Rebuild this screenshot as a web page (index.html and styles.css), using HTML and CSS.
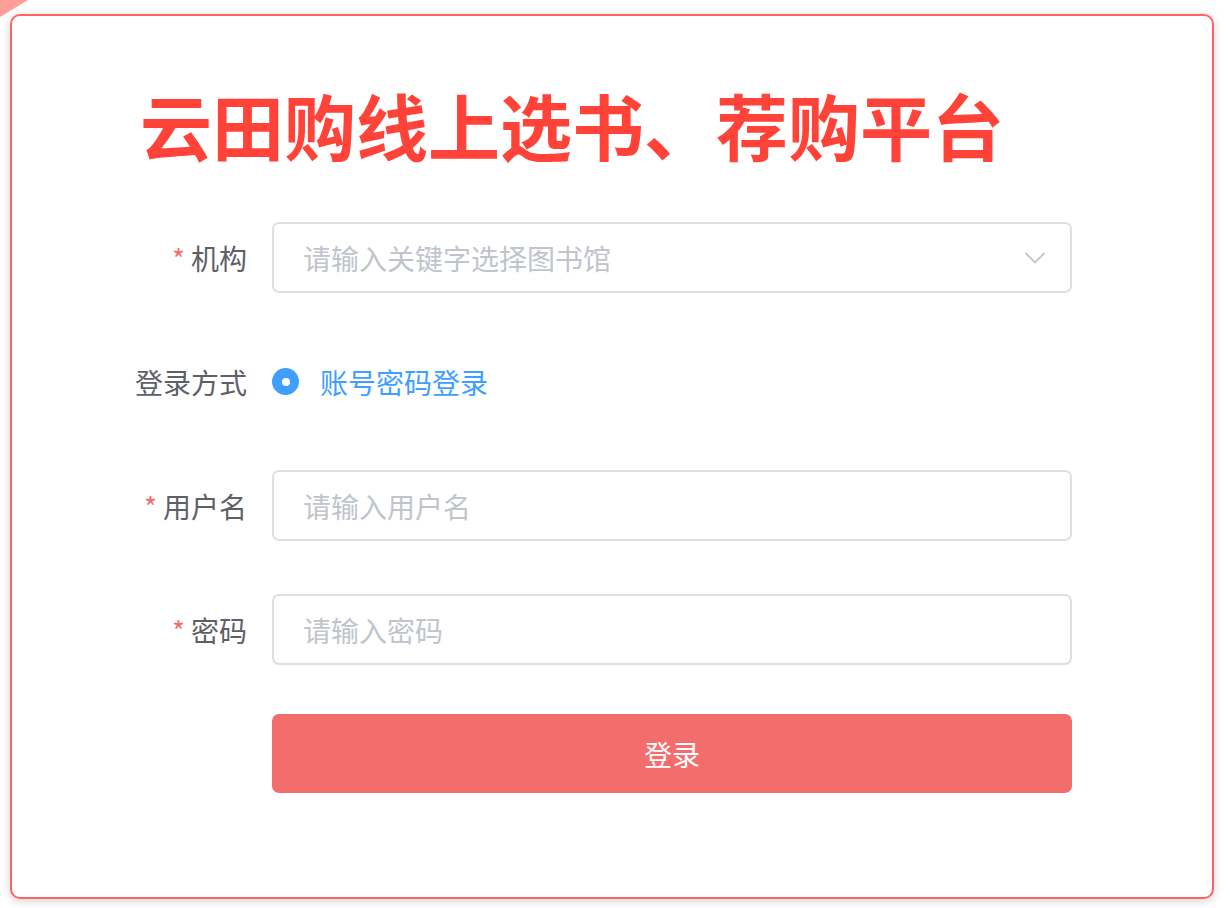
FILE: index.html
```html
<!DOCTYPE html>
<html lang="zh-CN">
<head>
<meta charset="utf-8">
<title>云田购线上选书、荐购平台</title>
<link rel="stylesheet" href="styles.css">
</head>
<body>
<div class="page">
  <div class="card">
    <h1 class="title">云田购线上选书、荐购平台</h1>
    <form class="form">
      <div class="row">
        <label class="label"><span class="req">*</span>机构</label>
        <div class="field select">
          <span class="placeholder">请输入关键字选择图书馆</span>
          <svg class="arrow" width="22" height="14" viewBox="0 0 22 14"><path d="M1.5 2 L11 11.5 L20.5 2" fill="none" stroke="#c0c4cc" stroke-width="1.8"/></svg>
        </div>
      </div>
      <div class="row">
        <label class="label">登录方式</label>
        <div class="radio">
          <span class="radio-dot"></span>
          <span class="radio-text">账号密码登录</span>
        </div>
      </div>
      <div class="row">
        <label class="label"><span class="req">*</span>用户名</label>
        <div class="field"><span class="placeholder">请输入用户名</span></div>
      </div>
      <div class="row">
        <label class="label"><span class="req">*</span>密码</label>
        <div class="field"><span class="placeholder">请输入密码</span></div>
      </div>
      <div class="row btn-row">
        <div class="label"></div>
        <button type="button" class="btn">登录</button>
      </div>
    </form>
  </div>
</div>
</body>
</html>
```
FILE: styles.css
```css
* { box-sizing: border-box; }
html, body {
  margin: 0;
  padding: 0;
  background: #ffffff;
  font-family: "Noto Sans CJK SC", "Noto Sans", sans-serif;
}
.page {
  position: relative;
  width: 1230px;
  height: 908px;
  padding: 14px 16px 9px 10px;
  overflow: hidden;
}
.page::before {
  content: "";
  position: absolute;
  left: 0;
  top: 0;
  width: 28px;
  height: 17px;
  background: #ff9d97;
  clip-path: polygon(0 0, 100% 0, 0 100%);
}
.card {
  height: 885px;
  border: 2px solid #ff6461;
  border-radius: 10px;
  background: #fff;
  box-shadow: 0 2px 10px rgba(0, 0, 0, 0.18);
  padding-top: 58px;
}
.title {
  margin: 0 0 0 128px;
  font-size: 72px;
  line-height: 100px;
  font-weight: 700;
  color: #ff4339;
  letter-spacing: 0;
}
.form {
  margin: 48px 0 0 105px;
}
.row {
  display: flex;
  align-items: center;
  height: 71px;
  margin-bottom: 53px;
}
.label {
  width: 130px;
  margin-right: 25px;
  text-align: right;
  font-size: 28px;
  color: #5e6066;
}
.req {
  color: #f56c6c;
  margin-right: 6px;
}
.field {
  width: 800px;
  height: 71px;
  border: 2px solid #dcdfe6;
  border-radius: 7px;
  display: flex;
  align-items: center;
  padding-left: 29px;
  padding-right: 24px;
}
.placeholder {
  font-size: 28px;
  color: #c0c4cc;
  flex: 1;
}
.arrow { display: block; }
.radio {
  display: flex;
  align-items: center;
}
.radio-dot {
  width: 27px;
  height: 27px;
  border-radius: 50%;
  background: #409eff;
  position: relative;
  margin-right: 21px;
}
.radio-dot::after {
  content: "";
  position: absolute;
  left: 50%;
  top: 50%;
  width: 8px;
  height: 8px;
  margin: -4px 0 0 -4px;
  border-radius: 50%;
  background: #fff;
}
.radio-text {
  font-size: 28px;
  color: #409eff;
}
.btn-row {
  height: 79px;
  margin-top: -4px;
}
.btn {
  width: 800px;
  height: 79px;
  border: none;
  border-radius: 7px;
  background: #f46d6d;
  color: #fff;
  font-family: inherit;
  font-size: 28px;
  padding: 0;
}
```
